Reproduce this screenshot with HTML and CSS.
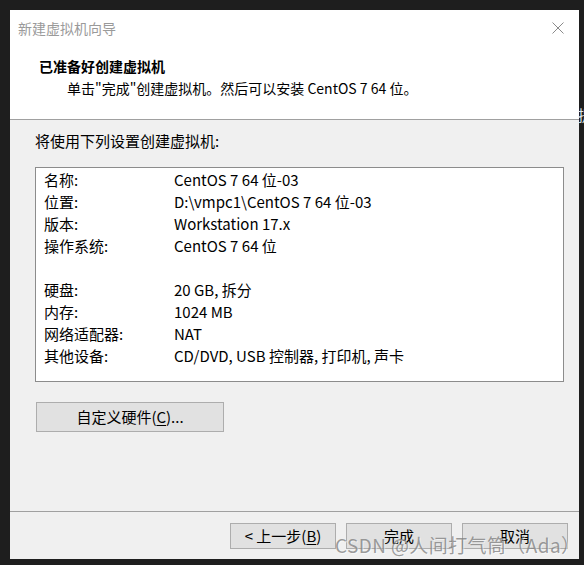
FILE: index.html
```html
<!DOCTYPE html>
<html lang="zh-CN">
<head>
<meta charset="utf-8">
<title>新建虚拟机向导</title>
<link rel="stylesheet" href="styles.css">
</head>
<body>
<div class="window">
  <div class="titlebar">
    <span class="title">新建虚拟机向导</span>
    <svg class="close" width="12" height="12" viewBox="0 0 12 12"><path d="M0.5 0.5 L11.5 11.5 M11.5 0.5 L0.5 11.5" stroke="#8a8a8a" stroke-width="1" fill="none"/></svg>
  </div>
  <div class="header">
    <div class="h-title">已准备好创建虚拟机</div>
    <div class="h-sub">单击"完成"创建虚拟机。然后可以安装 CentOS 7 64 位。</div>
  </div>
  <div class="body">
    <div class="intro">将使用下列设置创建虚拟机:</div>
    <div class="listbox">
      <div class="row"><span class="k">名称:</span><span class="v">CentOS 7 64 位-03</span></div>
      <div class="row"><span class="k">位置:</span><span class="v">D:\vmpc1\CentOS 7 64 位-03</span></div>
      <div class="row"><span class="k">版本:</span><span class="v">Workstation 17.x</span></div>
      <div class="row"><span class="k">操作系统:</span><span class="v">CentOS 7 64 位</span></div>
      <div class="row"></div>
      <div class="row"><span class="k">硬盘:</span><span class="v">20 GB, 拆分</span></div>
      <div class="row"><span class="k">内存:</span><span class="v">1024 MB</span></div>
      <div class="row"><span class="k">网络适配器:</span><span class="v">NAT</span></div>
      <div class="row"><span class="k">其他设备:</span><span class="v">CD/DVD, USB 控制器, 打印机, 声卡</span></div>
    </div>
    <button class="btn custom">自定义硬件(<u>C</u>)...</button>
  </div>
  <div class="footer">
    <button class="btn nav">&lt;&nbsp;上一步(<u>B</u>)</button>
    <button class="btn nav">完成</button>
    <button class="btn nav">取消</button>
  </div>
</div>
<span class="edge-glyph">提</span>
<span class="watermark">CSDN @人间打气筒（Ada）</span>
</body>
</html>
```
FILE: styles.css
```css
html, body {
  margin: 0;
  padding: 0;
}
body {
  width: 584px;
  height: 565px;
  background: #1e1e1e;
  overflow: hidden;
  position: relative;
  font-family: "Noto Sans CJK SC", sans-serif;
  color: #000;
}
.window {
  position: relative;
  margin: 10px 0 0 10px;
  width: 569px;
  height: 549px;
  background: #f0f0f0;
  display: flex;
  flex-direction: column;
}
.titlebar {
  height: 37px;
  background: #fff;
  display: flex;
  align-items: center;
  justify-content: space-between;
  padding: 0 15px 0 8px;
}
.title {
  font-size: 14px;
  color: #9a9a9a;
  line-height: 20px;
  margin-top: -1px;
}
.close {
  display: block;
  margin-top: -1px;
}
.header {
  background: #fff;
  border-bottom: 1px solid #a0a0a0;
  padding: 0 0 0 29px;
  box-sizing: border-box;
  height: 73px;
}
.h-title {
  font-size: 14px;
  font-weight: bold;
  line-height: 20px;
  margin-top: 9px;
}
.h-sub {
  font-size: 14px;
  line-height: 20px;
  margin-top: 2px;
  padding-left: 28px;
}
.body {
  flex: 1;
  border-bottom: 1px solid #a0a0a0;
  padding: 10px 14px 0 25px;
  font-size: 15px;
}
.intro {
  line-height: 22px;
}
.listbox {
  margin-top: 15px;
  width: 529px;
  height: 215px;
  box-sizing: border-box;
  border: 1px solid #8c8c8c;
  background: #fff;
  padding: 1px 0 0 8px;
}
.row {
  height: 22px;
  line-height: 22px;
  display: flex;
  white-space: nowrap;
}
.k {
  width: 130px;
}
.btn {
  font-family: "Noto Sans CJK SC", sans-serif;
  background: #e1e1e1;
  border: 1px solid #adadad;
  color: #000;
  padding: 0;
  margin: 0;
  box-sizing: border-box;
}
.btn u {
  text-decoration-thickness: 1px;
  text-underline-offset: 2px;
}
.custom {
  display: block;
  margin: 20px 0 0 1px;
  width: 188px;
  height: 30px;
  font-size: 15px;
  line-height: 20px;
}
.footer {
  height: 47px;
  display: flex;
  justify-content: flex-end;
  align-items: flex-start;
  gap: 10px;
  padding: 11px 11px 0 0;
  box-sizing: border-box;
}
.nav {
  width: 106px;
  height: 26px;
  font-size: 15px;
  line-height: 20px;
}
.edge-glyph {
  position: absolute;
  left: 578px;
  top: 105px;
  font-size: 15px;
  line-height: 20px;
  color: #dfe6ee;
}
.watermark {
  position: absolute;
  left: 335px;
  top: 532px;
  font-family: "Noto Sans CJK SC", sans-serif;
  font-size: 19px;
  line-height: 26px;
  letter-spacing: 0.4px;
  color: rgba(125, 125, 125, 0.75);
  text-shadow: 1px 1px 0 rgba(255, 255, 255, 0.5);
  white-space: nowrap;
}
```
